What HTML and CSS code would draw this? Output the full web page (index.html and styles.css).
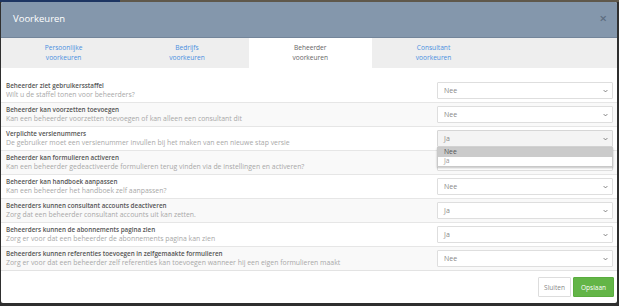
FILE: index.html
```html
<!DOCTYPE html>
<html lang="nl">
<head>
<meta charset="utf-8">
<title>Voorkeuren</title>
<link rel="stylesheet" href="styles.css">
</head>
<body>
<div class="modal">
  <div class="modal-header">
    <h1 class="modal-title">Voorkeuren</h1>
    <span class="close">&times;</span>
  </div>
  <div class="tabs">
    <a class="tab">Persoonlijke<br>voorkeuren</a>
    <a class="tab">Bedrijfs<br>voorkeuren</a>
    <a class="tab active">Beheerder<br>voorkeuren</a>
    <a class="tab">Consultant<br>voorkeuren</a>
  </div>
  <div class="modal-body">
    <div class="row">
      <div class="label"><div class="title">Beheerder ziet gebruikersstaffel</div><div class="desc">Wilt u de staffel tonen voor beheerders?</div></div>
      <div class="select"><span>Nee</span><svg class="chev" viewBox="0 0 8 5"><path d="M1 1l3 3 3-3"/></svg></div>
    </div>
    <div class="row">
      <div class="label"><div class="title">Beheerder kan voorzetten toevoegen</div><div class="desc">Kan een beheerder voorzetten toevoegen of kan alleen een consultant dit</div></div>
      <div class="select"><span>Nee</span><svg class="chev" viewBox="0 0 8 5"><path d="M1 1l3 3 3-3"/></svg></div>
    </div>
    <div class="row">
      <div class="label"><div class="title">Verplichte versienummers</div><div class="desc">De gebruiker moet een versienummer invullen bij het maken van een nieuwe stap versie</div></div>
      <div class="select open"><span>Ja</span><svg class="chev" viewBox="0 0 8 5"><path d="M1 1l3 3 3-3"/></svg>
        <div class="dropdown"><div class="opt hl">Nee</div><div class="opt">Ja</div></div>
      </div>
    </div>
    <div class="row">
      <div class="label"><div class="title">Beheerder kan formulieren activeren</div><div class="desc">Kan een beheerder gedeactiveerde formulieren terug vinden via de instellingen en activeren?</div></div>
      <div class="select covered"><span>Nee</span><svg class="chev" viewBox="0 0 8 5"><path d="M1 1l3 3 3-3"/></svg></div>
    </div>
    <div class="row">
      <div class="label"><div class="title">Beheerder kan handboek aanpassen</div><div class="desc">Kan een beheerder het handboek zelf aanpassen?</div></div>
      <div class="select"><span>Nee</span><svg class="chev" viewBox="0 0 8 5"><path d="M1 1l3 3 3-3"/></svg></div>
    </div>
    <div class="row">
      <div class="label"><div class="title">Beheerders kunnen consultant accounts deactiveren</div><div class="desc">Zorg dat een beheerder consultant accounts uit kan zetten.</div></div>
      <div class="select"><span>Ja</span><svg class="chev" viewBox="0 0 8 5"><path d="M1 1l3 3 3-3"/></svg></div>
    </div>
    <div class="row">
      <div class="label"><div class="title">Beheerders kunnen de abonnements pagina zien</div><div class="desc">Zorg er voor dat een beheerder de abonnements pagina kan zien</div></div>
      <div class="select"><span>Ja</span><svg class="chev" viewBox="0 0 8 5"><path d="M1 1l3 3 3-3"/></svg></div>
    </div>
    <div class="row">
      <div class="label"><div class="title">Beheerders kunnen referenties toevoegen in zelfgemaakte formulieren</div><div class="desc">Zorg er voor dat een beheerder zelf referenties kan toevoegen wanneer hij een eigen formulieren maakt</div></div>
      <div class="select"><span>Nee</span><svg class="chev" viewBox="0 0 8 5"><path d="M1 1l3 3 3-3"/></svg></div>
    </div>
  </div>
  <div class="modal-footer">
    <button class="btn btn-default">Sluiten</button>
    <button class="btn btn-success">Opslaan</button>
  </div>
</div>
</body>
</html>
```
FILE: styles.css
```css
* { box-sizing: border-box; }
html, body { margin: 0; padding: 0; }
body {
  width: 619px;
  height: 306px;
  overflow: hidden;
  font-family: "Open Sans", "Noto Sans", sans-serif;
  background: linear-gradient(to right, #1d3562 0, #1d3562 120px, #5f584b 120px) top left / 100% 2px no-repeat, #2f2f2f;
  padding: 2px 2px 3px 1px;
}
.modal {
  width: 616px;
  height: 301px;
  background: #fff;
  border-radius: 2px;
  overflow: hidden;
  display: flex;
  flex-direction: column;
}
.modal-header {
  height: 36px;
  background: #8497ac;
  border-bottom: 1px solid #73859a;
  display: flex;
  align-items: center;
  justify-content: space-between;
  padding: 0 10px 2px 12px;
}
.modal-title {
  margin: 0;
  font-size: 9.5px;
  font-weight: 400;
  color: #fff;
}
.close {
  color: #5d6d80;
  font-size: 13px;
  line-height: 1;
  font-weight: 600;
}
.tabs {
  height: 30px;
  background: #eeeeee;
  display: flex;
  padding-left: 1px;
}
.tab {
  width: 123.3px;
  display: flex;
  align-items: center;
  justify-content: center;
  text-align: center;
  font-size: 6.6px;
  line-height: 10px;
  color: #4a8fe0;
}
.tab.active {
  background: #fff;
  color: #666;
}
.modal-body {
  padding: 10px 0 0;
  border-bottom: 1px solid #e3e3e3;
}
.row {
  display: flex;
  align-items: center;
  justify-content: space-between;
  border-top: 1px solid #e6e6e6;
  padding: 3px 4px 3px 5px;
  height: 24px;
  position: relative;
}
.row:first-child { border-top-color: transparent; }
.row:nth-child(even) { background: #f9f9f9; }
.label { flex: 1; }
.title {
  font-size: 6.3px;
  line-height: 8.5px;
  font-weight: 600;
  color: #555;
}
.desc {
  font-size: 6.9px;
  line-height: 8.5px;
  color: #a8a8a8;
}
.select {
  width: 176px;
  height: 17px;
  border: 1px solid #dedede;
  border-radius: 1px;
  background: #fff;
  display: flex;
  align-items: center;
  justify-content: space-between;
  padding: 0 4px 0 6px;
  font-size: 7px;
  color: #888;
  position: relative;
}
.select.open { background: #f4f4f4; border-color: #d6d6d6; }
.select.covered span { visibility: hidden; }
.chev {
  width: 5px;
  height: 4px;
  fill: none;
  stroke: #666;
  stroke-width: 1.3;
}
.dropdown {
  position: absolute;
  left: -1px;
  top: 16px;
  width: 176px;
  background: #fff;
  border: 1px solid #c9c9c9;
  box-shadow: 0 1px 2px rgba(0,0,0,.25);
  z-index: 5;
  padding: 0 0 1px;
}
.opt {
  height: 8.5px;
  line-height: 8.5px;
  padding-left: 6px;
  font-size: 6.8px;
  color: #999;
}
.opt.hl { background: #cbcbcb; color: #555; }
.modal-footer {
  flex: 1;
  display: flex;
  justify-content: flex-end;
  align-items: center;
  gap: 2px;
  padding: 0 3px 0 0;
}
.btn {
  font-family: inherit;
  font-size: 6.5px;
  height: 20px;
  border-radius: 1px;
  padding: 0;
  cursor: pointer;
}
.btn-default {
  width: 33px;
  background: #fff;
  border: 1px solid #ddd;
  color: #888;
}
.btn-success {
  width: 41px;
  background: #63b547;
  border: 1px solid #5aac3f;
  color: #fff;
}
```
